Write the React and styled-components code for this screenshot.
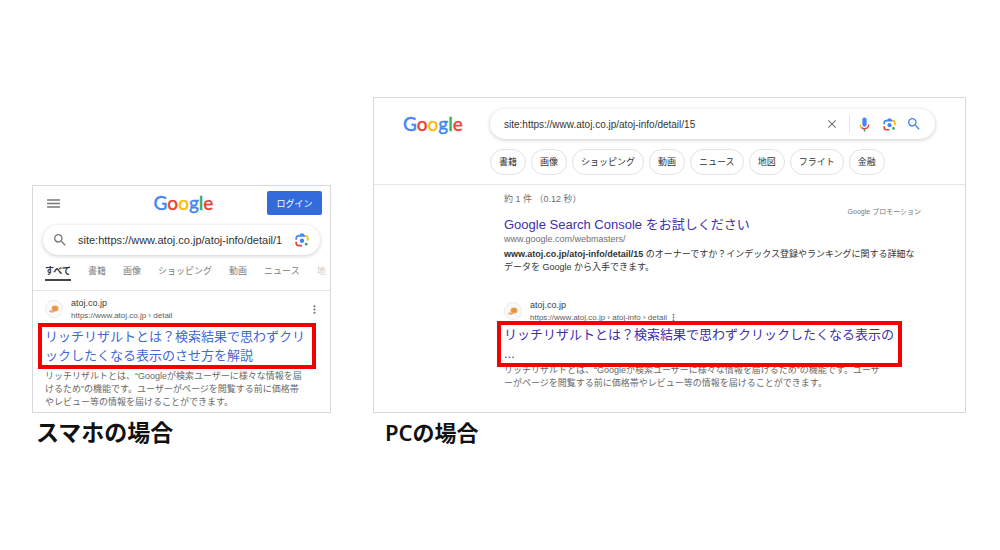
import React from "react";
import styled, { createGlobalStyle, css } from "styled-components";
import { MdClose, MdMenu, MdMoreVert, MdSearch } from "react-icons/md";

const GlobalStyle = createGlobalStyle`
  * {
    box-sizing: border-box;
  }

  body {
    margin: 0;
    background: #ffffff;
    color: #333333;
    font-family: "Liberation Sans", "Noto Sans CJK JP", sans-serif;
  }

  a {
    color: inherit;
    text-decoration: none;
  }

  h3, p {
    margin: 0;
  }

  button, input {
    font-family: inherit;
  }
`;

const Page = styled.main`
  display: grid;
  grid-template-columns: minmax(0, 299fr) minmax(0, 593fr);
  align-items: end;
  gap: 42px;
  padding: 97px 34px 0 32px;
`;

const Figure = styled.figure`
  margin: 0;
`;

const Caption = styled.figcaption`
  padding-left: ${(props) => props.$indent};
  padding-top: 3px;
  color: #111111;
  font-family: "Noto Sans", "Noto Sans CJK JP", sans-serif;
  font-size: ${(props) => props.$size};
  font-weight: 600;
  line-height: 32px;
`;

const Card = styled.div`
  border: 1px solid #d9d9d9;
  background: #ffffff;
  overflow: hidden;
`;

const LogoText = styled.span`
  font-family: Lato, sans-serif;
  font-size: 19px;
  font-weight: 500;
  line-height: 24px;
  padding-top: ${(props) => props.$top || 0};
`;

const Letter = styled.span`
  color: ${(props) => props.$color};
  -webkit-text-stroke: 0.3px ${(props) => props.$color};
`;

const MobileHeader = styled.header`
  display: grid;
  grid-template-columns: 1fr auto 1fr;
  align-items: center;
  padding: 5px 8px 0 12px;
`;

const IconButton = styled.button`
  display: flex;
  padding: 0;
  border: 0;
  background: none;
  color: ${(props) => props.$color || "#777777"};
`;

const LoginButton = styled.button`
  justify-self: end;
  width: 55px;
  height: 24px;
  padding: 0;
  border: 0;
  border-radius: 2px;
  background: #326cdc;
  color: #ffffff;
  font-size: 9px;
`;

const SearchBar = styled.form`
  display: flex;
  align-items: center;
  height: 30px;
  border-radius: 15px;
  background: #ffffff;
  box-shadow: 0 1px 4px rgba(0, 0, 0, 0.2);

  ${(props) =>
    props.$mobile
      ? css`
          gap: 10px;
          margin: 10px 10px 0;
          padding: 0 11px 0 9px;
        `
      : css`
          gap: 10px;
          padding: 0 13px 0 14px;
        `}
`;

const SearchInput = styled.input`
  flex: 1;
  min-width: 0;
  padding: 0;
  border: 0;
  outline: none;
  background: none;
  color: #333333;
  font-size: ${(props) => props.$size};
`;

const Separator = styled.span`
  width: 1px;
  height: 18px;
  margin-right: -4px;
  background: #e4e4e4;
`;

const Tabs = styled.nav`
  display: flex;
  gap: 17px;
  margin-top: 8px;
  padding-left: 12px;
  border-bottom: 1px solid #e6e6e6;
  white-space: nowrap;
  overflow: hidden;
`;

const Tab = styled.a`
  flex: none;
  height: 18px;
  margin-bottom: 9px;
  border-bottom: 2px solid ${(props) => (props.$active ? "#444444" : "transparent")};
  color: ${(props) => (props.$active ? "#333333" : props.$faded ? "#cccccc" : "#808080")};
  font-size: 9px;
  font-weight: ${(props) => (props.$active ? 700 : 400)};
  line-height: 16px;
`;

const MobileResult = styled.article`
  padding: 6px 9px 3px 12px;
`;

const Site = styled.div`
  display: flex;
  align-items: center;
  gap: 8px;
`;

const SiteNames = styled.div`
  flex: ${(props) => (props.$grow ? 1 : "none")};
`;

const SiteName = styled.div`
  color: #3c3c3c;
  font-size: 9px;
  line-height: 13px;
`;

const SiteUrl = styled.div`
  display: flex;
  align-items: center;
  gap: 1px;
  color: #606060;
  font-size: 8px;
  line-height: 11px;
`;

const Favicon = styled.span`
  display: flex;
  align-items: center;
  justify-content: center;
  width: 18px;
  height: 18px;
  border: 1px solid #ececec;
  border-radius: 50%;
  background: #fafafa;
`;

const Highlight = styled.h3`
  position: relative;
  z-index: 1;
  margin: ${(props) => props.$margin};
  padding: 0 3px;
  border: 4px solid #f40000;
  background: #ffffff;
  color: ${(props) => props.$color};
  font-size: 13px;
  font-weight: 400;
  line-height: 19px;
  white-space: nowrap;
`;

const Description = styled.p`
  color: ${(props) => props.$color || "#686868"};
  font-size: 9px;
  line-height: 13px;
  white-space: nowrap;
`;

const DesktopHeader = styled.header`
  display: grid;
  grid-template-columns: 87px minmax(0, 1fr);
  padding: 11px 30px 9px 29px;
  border-bottom: 1px solid #e6e6e6;
`;

const Chips = styled.nav`
  display: flex;
  gap: 5px;
  grid-column: 2;
  margin-top: 10px;
`;

const Chip = styled.a`
  padding: 0 8px;
  border: 1px solid #e2e2e2;
  border-radius: 13px;
  color: #333333;
  font-size: 9px;
  line-height: 24px;
  white-space: nowrap;
`;

const DesktopBody = styled.div`
  padding: 7px 44px 22px 130px;
`;

const Stats = styled.p`
  color: #707070;
  font-size: 9px;
  line-height: 14px;
`;

const Promotion = styled.p`
  color: #777777;
  font-size: 7px;
  line-height: 11px;
  text-align: right;
`;

const PromoTitle = styled.h3`
  color: #4130ad;
  font-size: 13px;
  font-weight: 400;
  line-height: 15px;
  white-space: nowrap;
`;

const PromoUrl = styled.p`
  margin-bottom: 2px;
  color: #707070;
  font-size: 9px;
  line-height: 14px;
`;

const DesktopResult = styled.article`
  margin-top: 25px;

  ${Description} {
    margin-top: -3px;
  }
`;

const logoColors = ["#4285f4", "#ea4335", "#fbbc05", "#4285f4", "#34a853", "#ea4335"];

const mobileTabs = ["書籍", "画像", "ショッピング", "動画", "ニュース"];

const chips = ["書籍", "画像", "ショッピング", "動画", "ニュース", "地図", "フライト", "金融"];

const Logo = ({ top }) => (
  <LogoText $top={top}>
    {"Google".split("").map((letter, index) => (
      <Letter key={index} $color={logoColors[index]}>
        {letter}
      </Letter>
    ))}
  </LogoText>
);

const LensIcon = ({ size }) => (
  <svg width={size} height={size} viewBox="16 16 160 160">
    <circle fill="#34a853" cx="144" cy="144" r="16" />
    <circle fill="#4285f4" cx="96" cy="104" r="25" />
    <path
      fill="#ea4335"
      d="M20 135c0 18 15 35 37 35H96v-20H56c-9 0-16-7-16-16v-18H20z"
    />
    <path
      fill="#fbbc04"
      d="M172 73c0-18-15-35-37-35h-19l20 20c9 0 16 7 16 16v30h20z"
    />
    <path
      fill="#4285f4"
      d="M112 22H80L68 38H57C35 38 20 55 20 73v19h20V74c0-9 7-16 16-16h80z"
    />
  </svg>
);

const MicIcon = () => (
  <svg width="17" height="17" viewBox="0 0 24 24">
    <path
      fill="#4285f4"
      d="M12 15c1.66 0 3-1.31 3-2.97V5.01C15 3.35 13.66 2 12 2S9 3.34 9 5.01v7.02C9 13.69 10.34 15 12 15z"
    />
    <path fill="#34a853" d="M11 18.08h2V22h-2z" />
    <path
      fill="#fbbc04"
      d="M7.05 16.87C5.78 15.54 5 14.04 5 12h2c0 1.45.56 2.42 1.47 3.38v.32l-1.15 1.18z"
    />
    <path
      fill="#ea4335"
      d="M12 16.93a4.97 5.25 0 0 1-3.54-1.55l-1.41 1.49C8.31 18.21 10.07 19 12 19c3.87 0 6.99-2.92 6.99-7H17c0 2.92-2.24 4.93-5 4.93z"
    />
  </svg>
);

const SiteIcon = () => (
  <Favicon>
    <svg width="10" height="10" viewBox="0 0 20 20" fill="none">
      <ellipse cx="12" cy="9" rx="7" ry="6" fill="#f0a044" />
      <path d="M1 14c4 2 8 2 11-2" stroke="#eda36f" strokeWidth="4" />
      <circle cx="12" cy="9" r="2" fill="#fff3e0" stroke="#d9654b" strokeWidth="2" />
    </svg>
  </Favicon>
);

const MobilePreview = () => (
  <Card>
    <MobileHeader>
      <IconButton aria-label="メニュー">
        <MdMenu size={17} />
      </IconButton>
      <Logo />
      <LoginButton>ログイン</LoginButton>
    </MobileHeader>
    <SearchBar $mobile>
      <IconButton type="button" aria-label="検索">
        <MdSearch size={16} />
      </IconButton>
      <SearchInput
        $size="11px"
        aria-label="検索キーワード"
        defaultValue="site:https://www.atoj.co.jp/atoj-info/detail/1"
      />
      <IconButton type="button" aria-label="画像で検索">
        <LensIcon size={14} />
      </IconButton>
    </SearchBar>
    <Tabs>
      <Tab href="#" $active>
        すべて
      </Tab>
      {mobileTabs.map((tab) => (
        <Tab key={tab} href="#">
          {tab}
        </Tab>
      ))}
      <Tab href="#" $faded>
        地
      </Tab>
    </Tabs>
    <MobileResult>
      <Site>
        <SiteIcon />
        <SiteNames $grow>
          <SiteName>atoj.co.jp</SiteName>
          <SiteUrl>https://www.atoj.co.jp › detail</SiteUrl>
        </SiteNames>
        <IconButton aria-label="詳細">
          <MdMoreVert size={13} />
        </IconButton>
      </Site>
      <Highlight $color="#4168d4" $margin="2px 5px 1px -7px">
        <a href="#">
          リッチリザルトとは？検索結果で思わずクリ
          <br />
          ックしたくなる表示のさせ方を解説
        </a>
      </Highlight>
      <Description>
        リッチリザルトとは、“Googleが検索ユーザーに様々な情報を届
        <br />
        けるため”の機能です。ユーザーがページを閲覧する前に価格帯
        <br />
        やレビュー等の情報を届けることができます。
      </Description>
    </MobileResult>
  </Card>
);

const DesktopPreview = () => (
  <Card>
    <DesktopHeader>
      <Logo top="3px" />
      <SearchBar>
        <SearchInput
          $size="10px"
          aria-label="検索キーワード"
          defaultValue="site:https://www.atoj.co.jp/atoj-info/detail/15"
        />
        <IconButton type="button" aria-label="クリア">
          <MdClose size={14} />
        </IconButton>
        <Separator />
        <IconButton type="button" aria-label="音声検索">
          <MicIcon />
        </IconButton>
        <IconButton type="button" aria-label="画像で検索">
          <LensIcon size={13} />
        </IconButton>
        <IconButton aria-label="検索" $color="#4285f4">
          <MdSearch size={16} />
        </IconButton>
      </SearchBar>
      <Chips>
        {chips.map((chip) => (
          <Chip key={chip} href="#">
            {chip}
          </Chip>
        ))}
      </Chips>
    </DesktopHeader>
    <DesktopBody>
      <Stats>約 1 件 （0.12 秒）</Stats>
      <Promotion>Google プロモーション</Promotion>
      <PromoTitle>
        <a href="#">Google Search Console をお試しください</a>
      </PromoTitle>
      <PromoUrl>www.google.com/webmasters/</PromoUrl>
      <Description $color="#333333">
        <b>www.atoj.co.jp/atoj-info/detail/15</b> のオーナーですか？インデックス登録やランキングに関する詳細な
        <br />
        データを Google から入手できます。
      </Description>
      <DesktopResult>
        <Site>
          <SiteIcon />
          <SiteNames>
            <SiteName>atoj.co.jp</SiteName>
            <SiteUrl>
              https://www.atoj.co.jp › atoj-info › detail
              <IconButton aria-label="詳細">
                <MdMoreVert size={11} />
              </IconButton>
            </SiteUrl>
          </SiteNames>
        </Site>
        <Highlight $color="#4130ad" $margin="-2px 19px 0 -7px">
          <a href="#">
            リッチリザルトとは？検索結果で思わずクリックしたくなる表示の
            <br />
            ...
          </a>
        </Highlight>
        <Description>
          リッチリザルトとは、“Googleが検索ユーザーに様々な情報を届けるため”の機能です。ユーザ
          <br />
          ーがページを閲覧する前に価格帯やレビュー等の情報を届けることができます。
        </Description>
      </DesktopResult>
    </DesktopBody>
  </Card>
);

const App = () => {
  return (
    <>
      <GlobalStyle />
      <Page>
        <Figure>
          <MobilePreview />
          <Caption $indent="4px" $size="23px">
            スマホの場合
          </Caption>
        </Figure>
        <Figure>
          <DesktopPreview />
          <Caption $indent="12px" $size="22px">
            PCの場合
          </Caption>
        </Figure>
      </Page>
    </>
  );
};

export default App;
